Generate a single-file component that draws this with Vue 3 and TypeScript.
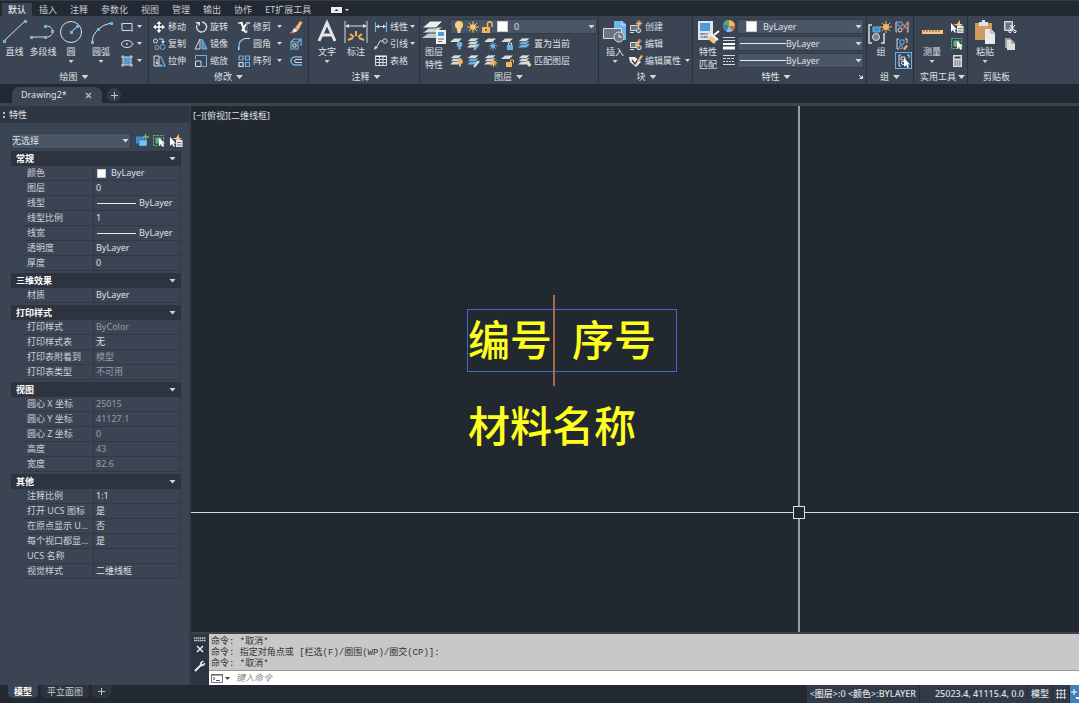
<script setup lang="ts">
import { ref } from 'vue'

interface Tool { icon: string; label: string; arrow?: boolean }
interface Row { name: string; value: string; kind?: 'swatch' | 'line'; muted?: boolean }
interface Section { title: string; rows: Row[] }

const menus: string[] = ['默认', '插入', '注释', '参数化', '视图', '管理', '输出', '协作', 'ET扩展工具']
const activeMenu = ref('默认')

const W = '#d9dcdf'
const B = '#6cb2e4'
const O = '#f3b562'

const layers = (extra: string): string =>
  `<path d="M4 1.500h8L8.500 5H0z" fill="${W}"/>${extra}`
const stack = (extra: string, tint = W): string =>
  `<path d="M4 7h8l-3.500 3.500H0z" fill="${tint}"/><path d="M4 4h8L8.500 7.500H0z" fill="${tint}" stroke="#3b4453" stroke-width=".6"/><path d="M4 1h8L8.500 4.500H0z" fill="${W}" stroke="#3b4453" stroke-width=".6"/>${extra}`
const bulb = (x: number, y: number, c: string): string =>
  `<circle cx="${x}" cy="${y}" r="2.800" fill="${c}"/><path d="M${x} ${y + 2}v3" stroke="${c}" stroke-width="2"/>`
const sun = (x: number, y: number, c: string, r: number): string =>
  `<circle cx="${x}" cy="${y}" r="${r}" fill="${c}"/><path d="M${x - 2 * r} ${y}h${4 * r}M${x} ${y - 2 * r}v${4 * r}M${x - 1.4 * r} ${y - 1.4 * r}l${2.8 * r} ${2.8 * r}M${x - 1.4 * r} ${y + 1.4 * r}l${2.8 * r} ${-2.8 * r}" stroke="${c}"/>`
const pencil = `<path d="M6 8l4-6 2.500 1.500L8.500 9 6 10z" fill="${O}"/><path d="M9.500 2.500L12 4" stroke="#d9653b" stroke-width="1.500"/>`

const small: Record<string, string> = {
  rect: `<path d="M2 3.500h10v7H2z" fill="none" stroke="${W}"/><path d="M1 3h2v2H1zM11 9.500h2v2h-2z" fill="${B}"/>`,
  ellipse: `<ellipse cx="7" cy="7" rx="5.500" ry="3.500" fill="none" stroke="${W}"/><path d="M6 6h2v2H6zM11.500 6h2v2h-2z" fill="${B}"/>`,
  hatch: `<path d="M3 3h8v8H3z" fill="#4a8cc4"/><path d="M3 1v12M11 1v12M1 3h12M1 11h12" stroke="${W}"/><path d="M4 8l4-4M5 10l5-5M8 11l3-3" stroke="${B}"/>`,
  move: `<path d="M7 2v10M2 7h10" stroke="#fff" stroke-width="1.500"/><path d="M7 1L4.500 4h5zM7 13l-2.500-3h5zM1 7l3-2.500v5zM13 7l-3-2.500v5z" fill="#fff"/>`,
  rotate: `<path d="M8 2a5 5 0 1 1-5 3" fill="none" stroke="${W}" stroke-width="1.400"/><path d="M1 2h5v4z" fill="${W}"/>`,
  trim: `<path d="M1 3h5M9 3h4" stroke="${W}" stroke-width="1.500"/><path d="M4 2l4 10M9 4l-4 7" stroke="#fff" stroke-width="2"/><path d="M10 4v8" stroke="${B}" stroke-dasharray="2 1"/><circle cx="9" cy="12" r="1.300" fill="${W}"/>`,
  erase: `<path d="M6 8l5-7 2.500 1.500L9.500 10z" fill="${O}"/><path d="M5 8l4 2-2 2H3z" fill="#eee"/><path d="M1 12.500h5" stroke="#e0734c" stroke-width="1.500"/>`,
  copy: `<g fill="none" stroke="${W}"><circle cx="3.500" cy="4" r="2"/><path d="M7 2h4v3"/></g><path d="M9 4l2 3 2-3z" fill="${W}"/><g fill="none" stroke="${B}"><circle cx="5" cy="10.500" r="2"/><circle cx="10.500" cy="10" r="2.500"/></g>`,
  mirror: `<path d="M6 2v10H1z" fill="none" stroke="${W}"/><path d="M8 2v10h5z" fill="#4a8cc4" stroke="${B}"/>`,
  fillet: `<path d="M2 13V9a7 7 0 0 1 5-7" fill="none" stroke="${B}" stroke-width="1.500"/><path d="M7 1.500h6M1.500 10v3" stroke="${W}"/>`,
  explode: `<path d="M2 5h7v7H2zM5 2h7v7M9 5l3-3M2 5l3-3" fill="none" stroke="${B}" stroke-width="1.200"/><path d="M4 7h3v3H4z" fill="none" stroke="${W}"/>`,
  stretch: `<path d="M2 2h5v10H2z" fill="none" stroke="${W}"/><path d="M7 3h2l4 9H7M4 11h6" fill="none" stroke="${B}" stroke-width="1.200"/><path d="M5 5v5M3.500 8L5 10l1.500-2" stroke="${W}" fill="none"/>`,
  scale: `<path d="M1.500 5V1.500h11v11H8" fill="none" stroke="${B}"/><path d="M1.500 7h5.500v5.500H1.500z" fill="none" stroke="${W}"/>`,
  array: `<g fill="none" stroke="${B}" stroke-width="1.200"><path d="M2 2h4v4H2zM8.500 2h4v4h-4zM8.500 8.500h4v4h-4z"/><path d="M2 8.500h4v4H2z" stroke="${W}"/></g>`,
  offset: `<path d="M13 3H6a4 4 0 0 0 0 8h7" fill="none" stroke="${B}" stroke-width="1.500"/><path d="M13 5.500H7a1.500 1.500 0 0 0 0 3h6" fill="none" stroke="${W}"/>`,
  linear: `<path d="M1.500 2v10M12.500 2v10" stroke="${B}" stroke-width="1.200"/><path d="M2 6.500h10" stroke="${W}"/><path d="M2 6.500l3-2v4zM12 6.500l-3-2v4z" fill="${W}"/>`,
  leader: `<circle cx="11" cy="4" r="2.200" fill="none" stroke="${W}"/><path d="M9 4H6L2 11" fill="none" stroke="${W}"/><path d="M0 13l1-4 3 1.500z" fill="${W}"/>`,
  table: `<path d="M1.500 2.500h11v9h-11zM1.500 5.500h11M1.500 8.500h11M5.500 3v8M9 3v8" fill="none" stroke="${W}"/><path d="M1 2h12" stroke="#fff"/>`,
  lOff: layers(bulb(9.5, 7.5, B)),
  lIso: stack(`<path d="M7 13l5-6" stroke="${B}" stroke-width="2"/>`),
  lFreeze: layers(sun(9, 9, B, 2)),
  lLock: layers(`<path d="M6 8h6v5H6z" fill="${B}"/><path d="M7.500 8V6h3v2" fill="none" stroke="${W}"/>`),
  lCurrent: stack('', B),
  lOn: stack(bulb(10, 7.5, O)),
  lUniso: stack(`<path d="M7 13l5-6" stroke="${W}" stroke-width="2"/>`, B),
  lThaw: stack(sun(9.5, 9, O, 2)),
  lUnlock: layers(`<path d="M5 8h6v5H5z" fill="${O}"/><path d="M9.500 8V6h3v3" fill="none" stroke="${O}"/>`),
  lMatch: stack(`<path d="M7 8l4 5 2.500-2-3-4z" fill="#f3d7a6"/>`),
  create: `<path d="M1.500 5.500h8v5h-8zM1 12.500h4" fill="#687382" stroke="${W}"/><circle cx="9.500" cy="10.500" r="2.200" fill="#687382" stroke="${W}"/>${sun(10, 3.5, O, 1.6)}`,
  edit: `<path d="M1.500 5.500h8v5h-8zM1 12.500h4" fill="#687382" stroke="${W}"/><circle cx="10" cy="10.500" r="2.200" fill="#687382" stroke="${W}"/>${pencil}`,
  attr: `<path d="M0 3h6l6 5-5 5-6-5z" fill="#eee"/><path d="M3 6l3 4 4-6" fill="none" stroke="#3b4453" stroke-width="1.500"/><path d="M8 7l4-6 2 1-4 6z" fill="${O}"/>`,
  wheel: `<circle cx="7" cy="7" r="6" fill="#f0c04a"/><path d="M7 7V1a6 6 0 0 0-5.500 4z" fill="#5ba664"/><path d="M7 7L1.500 5a6 6 0 0 0 3 7.500z" fill="#3678c9"/><path d="M7 7l-2.500 5.500a6 6 0 0 0 6-.800z" fill="#76c4ea"/><path d="M7 7h6a6 6 0 0 1-2.500 4.700z" fill="#db653f"/>`,
  weights: `<path d="M1 1.500h12M1 4.500h12" stroke="${W}"/><path d="M1 8h12" stroke="#fff" stroke-width="2"/><path d="M1 12h12" stroke="#fff" stroke-width="3"/>`,
  types: `<path d="M1 2.500h12M1 11.500h12" stroke="${W}"/><path d="M1 5.500h12" stroke="${W}" stroke-dasharray="3 1"/><path d="M1 8.500h12" stroke="${W}" stroke-dasharray="2 1"/>`,
  ungroup: `<path d="M2 2H1v10h1M12 2h1v10h-1" stroke="${W}" fill="none"/><path d="M3 2h4v4H3z" fill="none" stroke="${B}"/><circle cx="5" cy="10" r="2" fill="none" stroke="${W}"/><path d="M8 4l4 5M12 3L8 9" stroke="#e37a55" stroke-width="1.300"/>`,
  groupEdit: `<path d="M4 2H2v10h2M10 2h2v4" stroke="${W}" fill="none"/><path d="M5 3h4v4H5z" fill="none" stroke="${B}"/><circle cx="6" cy="10" r="1.600" fill="none" stroke="${B}"/><path d="M8 12l3-4 2 1-3 4z" fill="${O}"/>`,
  groupSel: `<path d="M4 1H2v11h2M10 1h2v3" stroke="${W}" fill="none"/><path d="M4 3h4v3H4z" fill="none" stroke="${W}"/><circle cx="6" cy="9" r="1.600" fill="none" stroke="${W}"/><path d="M7 4v9l2-2 1.500 3 1.500-1-1.500-2.500H13z" fill="#fff"/>`,
  quick: `<path d="M1 3v9l2-2 2 3 1-1-1.500-2.500H7z" fill="#fff"/><path d="M3 4h4l3-4v4h3l-5 4V6z" fill="#f6c886"/><path d="M7 6h6.500v7H7z" fill="#e8e8e8"/><path d="M8 8.500h4.500M8 11h4.500" stroke="#5d7a98"/>`,
  select: `<path d="M1.500 1.500h10v10h-10z" fill="none" stroke="#65bd82" stroke-dasharray="2 1"/><path d="M3.500 3.500h6v6h-6z" fill="#5fb480"/><path d="M7 4v8l2-2 1.500 3 1.500-1-1.500-2.500H13z" fill="#fff"/>`,
  calc: `<path d="M3 1h9v12H3z" fill="#ddd"/><path d="M4.500 3.500h6" stroke="#3b4453" stroke-width="2"/><path d="M4.500 7h6M4.500 9h6M4.500 11h6" stroke="#3b4453" stroke-dasharray="1.500 .8"/>`,
  cut: `<path d="M1.500 1.500h8v9h-8z" fill="#9aa1aa" stroke="${W}"/><path d="M3 4h5M3 6h5M3 8h3" stroke="#3b4453"/><path d="M7 5l5 6M12 5l-5 6" stroke="#fff"/><circle cx="7" cy="11.500" r="1.200" fill="none" stroke="#fff"/><circle cx="12" cy="11.500" r="1.200" fill="none" stroke="#fff"/>`,
  pages: `<path d="M2 1h5l3 3v7H2z" fill="#9ba2aa"/><path d="M4 3h5l3 3v7H4z" fill="#ddd"/><path d="M9 3v3h3" fill="none" stroke="#777"/>`,
  bulb: `<circle cx="7" cy="5" r="4" fill="#fbd078"/><path d="M5 8h4v3H5z" fill="#fbd078"/><path d="M5.500 12h3" stroke="#fff" stroke-width="1.500"/>`,
  sun: sun(7, 7, '#fbc768', 2.8),
  unlock: `<path d="M2 7h8v6H2z" fill="#f5b95c"/><path d="M7.500 7V4a2 2 0 0 1 4.500 0v3" fill="none" stroke="#f5b95c" stroke-width="1.500"/><path d="M6 9v2" stroke="#604a25" stroke-width="1.500"/>`,
  pim: `<path d="M1 2.500h8v7H1z" fill="#3f8fd0"/><path d="M4 6h8v6H4z" fill="#7cc3f3" stroke="#2a5c8c" stroke-width=".5"/><path d="M10.500 0v6M8 3h6" stroke="#69c486" stroke-width="1.300"/>`,
}

const big: Record<string, string> = {
  line: `<path d="M3 23L24 3" stroke="${W}"/><path d="M2 22h3v3H2zM23 2h3v3h-3z" fill="${B}"/>`,
  pline: `<path d="M3 19h14M17 19c9 0 9-11 0-11" fill="none" stroke="${W}"/><path d="M1 18h3v3H1zM15 18h3v3h-3zM15 7h3v3h-3zM22 12h3v3h-3z" fill="${B}"/>`,
  circle: `<circle cx="14" cy="14" r="10.500" fill="none" stroke="${W}"/><path d="M14 14l6-5" stroke="${B}" stroke-width="1.500"/><path d="M13 13h3v3h-3zM19 7h3v3h-3z" fill="${B}"/>`,
  arc: `<path d="M5 24A24 20 0 0 1 24 5" fill="none" stroke="${W}"/><path d="M4 23h3v3H4zM10 10h3v3h-3zM23 4h3v3h-3z" fill="${B}"/>`,
  text: `<path d="M6 23l8-18 8 18M9 17h10" fill="none" stroke="#e4e5e7" stroke-width="3"/>`,
  dim: `<path d="M3 3v22M25 3v22" stroke="${W}"/><path d="M4 8h20" stroke="${W}"/><path d="M3 8l4-2v4zM25 8l-4-2v4z" fill="${W}"/><path d="M6 22l5-2M8 16l4 3M14 13v5M20 16l-4 3M22 22l-5-2" stroke="${O}" stroke-width="2"/>`,
  layerProps: `<path d="M10 14h13l-7 6H2z" fill="#c5c9ce"/><path d="M10 9h13l-7 6H2z" fill="#d3d6da" stroke="#3b4453"/><path d="M10 3h13l-7 7H2z" fill="#eee" stroke="#3b4453"/><path d="M16 12h10v14H16z" fill="#f1f1f1"/><path d="M18 14h6v4h-6z" fill="#4d9bd8"/><path d="M18 21h6M18 23.500h4" stroke="#667"/>`,
  insert: `<path d="M13 3h8l4 3v16H13z" fill="#6eb7ea"/><path d="M21 3v4h4" fill="none" stroke="#cfe7f8"/><path d="M2.500 10.500h18v10h-18z" fill="#6b7582" stroke="${W}"/><circle cx="18" cy="19" r="5" fill="#6b7582" stroke="${W}"/><path d="M18 16v3h3" fill="none" stroke="#fff"/>`,
  match: `<path d="M4 3h15v19H4z" fill="#e2e3e4"/><path d="M6 5h10v8H6z" fill="#4d9bd8"/><path d="M6 16h8M6 19h8M8 15v2M11 18v2" stroke="#667"/><path d="M14 21l6 5 4-5-6-4z" fill="#f0c78d"/><path d="M20 17l5-4M17 16l7 6" stroke="#fff" stroke-width="2"/>`,
  group: `<path d="M5 7H2v18h3M14 25h3V15" fill="none" stroke="${W}" stroke-width="1.500"/><path d="M6 9h7v5H6z" fill="#3f8fc9" stroke="${B}"/><circle cx="9" cy="19" r="3.500" fill="#7b828c" stroke="${W}"/>${sun(19, 9, O, 3)}`,
  ruler: `<path d="M4 12h21v4H4z" fill="#f5c877"/><path d="M6 12v2M9 12v2M12 12v2M15 12v2M18 12v2M21 12v2" stroke="#755a2c"/>`,
  paste: `<path d="M4 5h17v17H4z" fill="#cf9a62"/><path d="M8 4h9v4H8z" fill="#dfe1e4"/><path d="M11 2h3v2h-3z" fill="#dfe1e4"/><path d="M14 11h6l4 4v11H14z" fill="#e8e9eb"/><path d="M20 11v4h4" fill="none" stroke="#999"/>`,
}

const drawBig: Tool[] = [
  { icon: 'line', label: '直线' }, { icon: 'pline', label: '多段线' },
  { icon: 'circle', label: '圆', arrow: true }, { icon: 'arc', label: '圆弧', arrow: true },
]
const drawSmall: Tool[] = [
  { icon: 'rect', label: '矩形' }, { icon: 'ellipse', label: '椭圆' }, { icon: 'hatch', label: '图案填充' },
]
const modify: Tool[] = [
  { icon: 'move', label: '移动' }, { icon: 'rotate', label: '旋转' }, { icon: 'trim', label: '修剪', arrow: true }, { icon: 'erase', label: '' },
  { icon: 'copy', label: '复制' }, { icon: 'mirror', label: '镜像' }, { icon: 'fillet', label: '圆角', arrow: true }, { icon: 'explode', label: '' },
  { icon: 'stretch', label: '拉伸' }, { icon: 'scale', label: '缩放' }, { icon: 'array', label: '阵列', arrow: true }, { icon: 'offset', label: '' },
]
const annotBig: Tool[] = [{ icon: 'text', label: '文字', arrow: true }, { icon: 'dim', label: '标注' }]
const annot: Tool[] = [
  { icon: 'linear', label: '线性', arrow: true }, { icon: 'leader', label: '引线', arrow: true }, { icon: 'table', label: '表格' },
]
const layerRows: Tool[][] = [
  ['lOff', 'lIso', 'lFreeze', 'lLock', 'lCurrent'].map((icon, i) => ({ icon, label: i === 4 ? '置为当前' : '' })),
  ['lOn', 'lUniso', 'lThaw', 'lUnlock', 'lMatch'].map((icon, i) => ({ icon, label: i === 4 ? '匹配图层' : '' })),
]
const block: Tool[] = [
  { icon: 'create', label: '创建' }, { icon: 'edit', label: '编辑' }, { icon: 'attr', label: '编辑属性', arrow: true },
]

const sections: Section[] = [
  { title: '常规', rows: [
    { name: '颜色', value: 'ByLayer', kind: 'swatch' }, { name: '图层', value: '0' },
    { name: '线型', value: 'ByLayer', kind: 'line' }, { name: '线型比例', value: '1' },
    { name: '线宽', value: 'ByLayer', kind: 'line' }, { name: '透明度', value: 'ByLayer' }, { name: '厚度', value: '0' },
  ] },
  { title: '三维效果', rows: [{ name: '材质', value: 'ByLayer' }] },
  { title: '打印样式', rows: [
    { name: '打印样式', value: 'ByColor', muted: true }, { name: '打印样式表', value: '无' },
    { name: '打印表附着到', value: '模型', muted: true }, { name: '打印表类型', value: '不可用', muted: true },
  ] },
  { title: '视图', rows: [
    { name: '圆心 X 坐标', value: '25015', muted: true }, { name: '圆心 Y 坐标', value: '41127.1', muted: true },
    { name: '圆心 Z 坐标', value: '0', muted: true }, { name: '高度', value: '43', muted: true }, { name: '宽度', value: '82.6', muted: true },
  ] },
  { title: '其他', rows: [
    { name: '注释比例', value: '1:1' }, { name: '打开 UCS 图标', value: '是' }, { name: '在原点显示 U...', value: '否' },
    { name: '每个视口都显...', value: '是' }, { name: 'UCS 名称', value: '' }, { name: '视觉样式', value: '二维线框' },
  ] },
]
const collapsed = ref<Record<string, boolean>>({})
const toggle = (title: string): void => {
  collapsed.value[title] = !collapsed.value[title]
}

const history: string[] = ['命令: *取消*', '命令: 指定对角点或 [栏选(F)/圈围(WP)/圈交(CP)]:', '命令: *取消*']
const command = ref('')
</script>

<template>
  <div class="app">
    <nav class="menu">
      <button v-for="m in menus" :key="m" class="menu-tab" :class="{ active: m === activeMenu }" @click="activeMenu = m">{{ m }}</button>
      <button class="menu-min" aria-label="最小化功能区">
        <svg width="18" height="8" viewBox="0 0 18 8"><path d="M0 1h11v6H0z" fill="#eee" /><path d="M3.500 5h4l-2-2z" fill="#333" /><path d="M14 3h4l-2 2z" fill="#ddd" /></svg>
      </button>
    </nav>

    <div class="ribbon">
      <section class="panel p-draw">
        <div class="tools">
          <button v-for="t in drawBig" :key="t.icon" class="big"><svg viewBox="0 0 28 27" v-html="big[t.icon]" /><span>{{ t.label }}</span><i v-if="t.arrow" class="tri" /></button>
          <div class="stack">
            <button v-for="t in drawSmall" :key="t.icon" class="tool" :aria-label="t.label"><svg viewBox="0 0 14 14" v-html="small[t.icon]" /><i class="tri" /></button>
          </div>
        </div>
        <button class="title">绘图<i class="tri wide" /></button>
      </section>

      <section class="panel p-modify">
        <div class="tools modify">
          <button v-for="t in modify" :key="t.icon" class="tool" :aria-label="t.label || t.icon"><svg viewBox="0 0 14 14" v-html="small[t.icon]" /><span v-if="t.label">{{ t.label }}</span><i v-if="t.arrow" class="tri end" /></button>
        </div>
        <button class="title">修改<i class="tri wide" /></button>
      </section>

      <section class="panel p-annot">
        <div class="tools">
          <button v-for="t in annotBig" :key="t.icon" class="big"><svg viewBox="0 0 28 27" v-html="big[t.icon]" /><span>{{ t.label }}</span><i v-if="t.arrow" class="tri" /></button>
          <div class="stack grow">
            <button v-for="t in annot" :key="t.icon" class="tool"><svg viewBox="0 0 14 14" v-html="small[t.icon]" /><span>{{ t.label }}</span><i v-if="t.arrow" class="tri end" /></button>
          </div>
        </div>
        <button class="title">注释<i class="tri wide" /></button>
      </section>

      <section class="panel p-layer">
        <div class="tools">
          <button class="big"><svg viewBox="0 0 28 27" v-html="big.layerProps" /><span>图层<br>特性</span></button>
          <div class="stack grow">
            <label class="combo">
              <svg viewBox="0 0 14 14" v-html="small.bulb" /><svg viewBox="0 0 14 14" v-html="small.sun" /><svg viewBox="0 0 14 14" v-html="small.unlock" />
              <i class="swatch" />
              <select aria-label="图层"><option>0</option></select><i class="tri wide" />
            </label>
            <div v-for="(r, i) in layerRows" :key="i" class="layer-row">
              <button v-for="t in r" :key="t.icon" class="tool" :aria-label="t.label || t.icon"><svg viewBox="0 0 14 14" v-html="small[t.icon]" /><span v-if="t.label">{{ t.label }}</span></button>
            </div>
          </div>
        </div>
        <button class="title">图层<i class="tri wide" /></button>
      </section>

      <section class="panel p-block">
        <div class="tools">
          <button class="big"><svg viewBox="0 0 28 27" v-html="big.insert" /><span>插入</span><i class="tri" /></button>
          <div class="stack grow">
            <button v-for="t in block" :key="t.icon" class="tool"><svg viewBox="0 0 14 14" v-html="small[t.icon]" /><span>{{ t.label }}</span><i v-if="t.arrow" class="tri end" /></button>
          </div>
        </div>
        <button class="title">块<i class="tri wide" /></button>
      </section>

      <section class="panel p-props">
        <div class="tools">
          <button class="big"><svg viewBox="0 0 28 27" v-html="big.match" /><span>特性<br>匹配</span></button>
          <div class="stack">
            <svg v-for="n in ['wheel', 'weights', 'types']" :key="n" class="mark" viewBox="0 0 14 14" v-html="small[n]" />
          </div>
          <div class="stack grow">
            <label class="combo color"><i class="swatch" /><select aria-label="对象颜色"><option>ByLayer</option></select><i class="tri wide" /></label>
            <label class="combo"><i class="rule" /><select aria-label="线宽"><option>ByLayer</option></select><i class="tri wide" /></label>
            <label class="combo"><i class="rule" /><select aria-label="线型"><option>ByLayer</option></select><i class="tri wide" /></label>
          </div>
        </div>
        <div class="title-row">
          <button class="title">特性<i class="tri wide" /></button>
          <button class="launch" aria-label="特性选项板"><svg width="6" height="6" viewBox="0 0 6 6"><path d="M1 1l3 3" stroke="#ddd" /><path d="M5 1v4H1z" fill="#ddd" /></svg></button>
        </div>
      </section>

      <section class="panel p-group">
        <div class="tools">
          <button class="big"><svg viewBox="0 0 28 27" v-html="big.group" /><span>组</span></button>
          <div class="stack">
            <button v-for="n in ['ungroup', 'groupEdit', 'groupSel']" :key="n" class="tool" :class="{ picked: n === 'groupSel' }" :aria-label="n"><svg viewBox="0 0 14 14" v-html="small[n]" /></button>
          </div>
        </div>
        <button class="title">组<i class="tri wide" /></button>
      </section>

      <section class="panel p-util">
        <div class="tools">
          <button class="big"><svg viewBox="0 0 28 27" v-html="big.ruler" /><span>测量</span><i class="tri" /></button>
          <div class="stack">
            <button v-for="n in ['quick', 'select', 'calc']" :key="n" class="tool" :aria-label="n"><svg viewBox="0 0 14 14" v-html="small[n]" /></button>
          </div>
        </div>
        <button class="title">实用工具<i class="tri wide" /></button>
      </section>

      <section class="panel p-clip">
        <div class="tools">
          <button class="big"><svg viewBox="0 0 28 27" v-html="big.paste" /><span>粘贴</span><i class="tri" /></button>
          <div class="stack">
            <button v-for="n in ['cut', 'pages']" :key="n" class="tool" :aria-label="n"><svg viewBox="0 0 14 14" v-html="small[n]" /></button>
          </div>
        </div>
        <span class="title">剪贴板</span>
      </section>
    </div>

    <div class="docs">
      <div class="doc">
        <button class="doc-name">Drawing2*</button>
        <button class="doc-x" aria-label="关闭"><svg width="7" height="7" viewBox="0 0 7 7"><path d="M1 1l5 5M6 1L1 6" stroke="#aeb4bc" stroke-width="1.500" /></svg></button>
      </div>
      <button class="doc-add" aria-label="新建图形"><svg width="7" height="7" viewBox="0 0 7 7"><path d="M0 3.500h7M3.500 0v7" stroke="#c0c5cb" /></svg></button>
    </div>

    <main class="work">
      <aside class="palette">
        <header class="pal-title"><i class="grip" />特性</header>
        <div class="picker">
          <label class="combo none"><select aria-label="选择对象"><option>无选择</option></select><i class="tri wide" /></label>
          <button v-for="n in ['pim', 'select', 'quick']" :key="n" class="tool" :aria-label="n"><svg viewBox="0 0 14 14" v-html="small[n]" /></button>
        </div>
        <div class="sections">
          <section v-for="s in sections" :key="s.title">
            <button class="sec-head" :aria-expanded="!collapsed[s.title]" @click="toggle(s.title)">{{ s.title }}<i class="tri wide" /></button>
            <table v-if="!collapsed[s.title]">
              <tbody>
                <tr v-for="r in s.rows" :key="r.name">
                  <th scope="row">{{ r.name }}</th>
                  <td :class="{ muted: r.muted }"><div><i v-if="r.kind === 'swatch'" class="swatch" /><i v-if="r.kind === 'line'" class="rule" />{{ r.value }}</div></td>
                </tr>
              </tbody>
            </table>
          </section>
        </div>
      </aside>

      <div class="stage">
        <div class="canvas">
          <div class="view-label">[−][俯视][二维线框]</div>
          <div class="frame" />
          <div class="marker" />
          <div class="cad first"><span>编号</span><span>序号</span></div>
          <div class="cad second">材料名称</div>
          <div class="cross-h" />
          <div class="cross-v" />
          <div class="pickbox" />
        </div>
        <div class="cmd">
          <div class="cmd-side">
            <svg width="12" height="5" viewBox="0 0 12 5"><path d="M0 1h12M0 3.500h12" stroke="#c5c9ce" stroke-width="1.500" stroke-dasharray="1.500 .5" /></svg>
            <button aria-label="关闭命令行"><svg width="8" height="8" viewBox="0 0 8 8"><path d="M1 1l6 6M7 1L1 7" stroke="#e6e8ea" stroke-width="1.500" /></svg></button>
            <button aria-label="自定义"><svg width="12" height="12" viewBox="0 0 12 12"><path d="M1 11l6-6" stroke="#eee" stroke-width="2" /><path d="M10 1L7.500 3.500l1 1L11 2.500A3 3 0 0 1 7 6 3 3 0 0 1 6 4a3 3 0 0 1 4-3z" fill="#eee" /></svg></button>
          </div>
          <div class="cmd-main">
            <div class="history"><p v-for="(h, i) in history" :key="i">{{ h }}</p></div>
            <label class="entry">
              <svg width="20" height="9" viewBox="0 0 20 9"><path d="M.5.500h11v8H.5z" fill="#fff" stroke="#777" /><path d="M0 1h12M2 3l2 1.500L2 6M5 6.500h4" fill="none" stroke="#555" /><path d="M14 3h5l-2.500 3z" fill="#444" /></svg>
              <input v-model="command" type="text" placeholder="键入命令" aria-label="键入命令">
            </label>
          </div>
        </div>
      </div>
    </main>

    <footer class="status">
      <button class="layout on">模型</button>
      <button class="layout">平立面图</button>
      <button class="layout add" aria-label="新建布局"><svg width="7" height="7" viewBox="0 0 7 7"><path d="M0 3.500h7M3.500 0v7" stroke="#c0c5cb" /></svg></button>
      <span class="cell push">&lt;图层&gt;:0 &lt;颜色&gt;:BYLAYER</span>
      <span class="cell coords">25023.4, 41115.4, 0.0</span>
      <button class="cell mode">模型</button>
      <button class="cell grid" aria-label="栅格"><svg width="12" height="12" viewBox="0 0 12 12"><path d="M2.500 1v10M6 1v10M9.500 1v10M1 2.500h10M1 6h10M1 9.500h10" stroke="#c9cdd2" /></svg></button>
      <button class="cell snap" aria-label="捕捉模式"><svg width="9" height="14" viewBox="0 0 9 14"><path d="M1 5h6M4 2v6" stroke="#fff" /><path d="M6 11h3" stroke="#fff" stroke-width="2" /></svg></button>
    </footer>
  </div>
</template>

<style>
html, body { margin: 0; background: #222933; }
</style>

<style scoped>
* { box-sizing: border-box; }
.app {
  display: flex;
  flex-direction: column;
  min-height: 100vh;
  overflow: hidden;
  background: #222933;
  color: #dfe1e4;
  font: 9px/12px "Noto Sans", "Noto Sans CJK SC", sans-serif;
}
button, select, input { margin: 0; padding: 0; border: 0; background: none; color: inherit; font: inherit; }
button { display: flex; align-items: center; white-space: nowrap; }
svg { display: block; flex: none; overflow: hidden; }

.tri { width: 5px; height: 3px; flex: none; background: #d4d7db; clip-path: polygon(0 0, 100% 0, 50% 100%); }
.tri.wide { width: 7px; height: 4px; }
.tri.end { margin-left: auto; }
.swatch { width: 11px; height: 11px; flex: none; background: #fff; border: 1px solid #c9ccd0; }
.rule { height: 1px; flex: none; background: #e8eaec; }

.menu { display: flex; gap: 1px; height: 16px; padding: 2px 0 0 2px; border-top: 1px solid #343c49; }
.menu-tab { padding: 0 6px; color: #c6cad0; }
.menu-tab.active { background: #3b4453; color: #fff; }
.menu-min { margin-left: 13px; }

.ribbon { display: flex; height: 68px; background: #3b4453; }
.panel { display: flex; flex-direction: column; flex: none; padding-top: 2px; border-right: 1px solid #293039; }
.tools { display: flex; height: 52px; }
.stack { display: flex; flex-direction: column; }
.grow { flex: 1; min-width: 0; }
.title { height: 14px; justify-content: center; align-self: center; gap: 4px; margin-top: auto; line-height: 14px; }
.big { flex-direction: column; width: 28px; line-height: 13px; text-align: center; }
.big svg { width: 28px; height: 27px; }
.big .tri { margin-top: 2px; }
.tool { gap: 2px; height: 17px; }
.tool svg, .mark, .combo svg { width: 14px; height: 14px; }
.mark { margin: 1px 0 2px; }
.combo { display: flex; align-items: center; height: 15px; margin: 1px 0; padding-right: 1px; background: #4a5566; border: 1px solid #343c49; }
.combo select { flex: 1; min-width: 0; height: 13px; appearance: none; outline: none; }

.p-draw { width: 149px; }
.p-draw .big:first-child { width: 29px; }
.p-draw .big:nth-child(4) { width: 32px; }
.p-draw .stack { padding-left: 3px; }
.p-draw .tool { gap: 3px; }
.p-modify { width: 160px; }
.modify { display: grid; grid-template-columns: 42px 43px 52px 14px; grid-auto-rows: 17px; padding-left: 3px; }
.modify .tri { margin-right: 7px; }
.p-annot { width: 111px; padding-left: 4px; }
.p-annot .stack { padding: 0 4px 0 3px; }
.p-annot .tools .big { margin-right: 1px; }
.p-layer { width: 179px; padding-right: 1px; }
.p-layer .stack { padding-left: 2px; }
.p-layer .combo { gap: 3px; padding-left: 1px; }
.p-layer .swatch { margin-right: 3px; }
.p-layer .combo svg { margin-right: -3px; }
.p-layer .combo .swatch { margin-left: 3px; }
.layer-row { display: flex; gap: 3px; }
.p-block { width: 94px; padding-left: 2px; }
.p-block .stack { padding-right: 2px; }
.p-props { width: 174px; padding: 2px 2px 0 1px; }
.p-props .stack.grow { padding-left: 1px; }
.p-props .combo .rule { width: 46px; margin-left: 2px; }
.p-props .color { gap: 6px; padding-left: 8px; }
.title-row { display: flex; align-items: center; margin-top: auto; }
.title-row .title { flex: 1; }
.p-group { width: 47px; }
.picked { width: 17px; justify-content: center; background: #34475e; border: 1px solid #6cb2e4; }
.p-util { width: 54px; padding-left: 4px; }
.p-util .stack { padding-left: 4px; }
.p-util .title { gap: 2px; }
.p-clip { width: 54px; padding-left: 3px; border-right: 0; }
.p-clip .stack { padding-left: 4px; }

.docs { display: flex; align-items: flex-end; height: 22px; padding-left: 12px; border-bottom: 3px solid #3b4453; }
.doc { display: flex; align-items: center; justify-content: space-between; width: 90px; height: 16px; padding: 0 10px 0 9px; background: #3b4453; border-radius: 7px 7px 0 0; }
.doc-add { justify-content: center; width: 14px; height: 14px; margin: 0 0 1px 5px; background: #343c49; border-radius: 7px; }

.work { display: flex; flex: 1; min-height: 0; }
.palette { width: 191px; flex: none; background: #3b4453; border-right: 2px solid #343c49; }
.pal-title { display: flex; align-items: center; gap: 4px; height: 17px; padding-left: 3px; background: #2f3642; }
.grip { width: 2px; height: 6px; border-top: 2px solid #bbb; border-bottom: 2px solid #bbb; }
.picker { display: flex; align-items: center; gap: 3px; padding: 9px 6px 2px 11px; }
.none { width: 120px; height: 16px; margin: 0 1px 0 0; }
.sections { display: flex; flex-direction: column; gap: 2px; padding: 0 8px 0 11px; }
.sec-head { justify-content: space-between; width: 100%; height: 15px; padding: 0 5px; background: #2d333f; color: #fff; font-weight: 700; }
table { width: 158px; margin-left: 12px; border-collapse: separate; border-spacing: 0; table-layout: fixed; }
th, td { height: 15px; padding: 0 0 0 4px; border-bottom: 1px solid #313946; font-weight: 400; text-align: left; white-space: nowrap; line-height: 12px; }
th { width: 70px; color: #cfd3d8; }
td { padding-left: 2px; border-left: 1px solid #313946; border-right: 1px solid #313946; }
td div { display: flex; align-items: center; height: 12px; }
td .swatch { width: 9px; height: 9px; margin: 0 5px 0 1px; }
td .rule { width: 39px; margin: 0 3px 0 1px; }
td.muted { color: #969da7; }

.stage { display: flex; flex: 1; flex-direction: column; min-width: 0; }
.canvas { position: relative; flex: 1; overflow: hidden; background: #212830; }
.view-label { padding: 4px 2px; }
.frame { position: absolute; left: 276px; top: 203px; width: 210px; height: 63px; border: 1px solid #3f68c8; }
.marker { position: absolute; left: 362px; top: 189px; width: 2px; height: 91px; background: #a8684a; }
.cad { position: absolute; left: 277px; color: #ffff1e; font-family: "Noto Sans CJK SC", sans-serif; font-size: 42px; line-height: 50px; font-weight: 500; white-space: nowrap; }
.first { display: flex; gap: 20px; top: 207px; }
.second { top: 293px; }
.cross-h { position: absolute; left: 0; right: 0; top: 406px; height: 1px; background: #d5d8dc; }
.cross-v { position: absolute; top: 0; bottom: 0; left: 607px; width: 2px; background: #969ba1; }
.pickbox { position: absolute; left: 602px; top: 400px; width: 12px; height: 13px; background: #212830; border: 1px solid #dfe2e5; }

.cmd { display: flex; height: 53px; border-top: 2px solid #39434e; }
.cmd-side { display: flex; flex-direction: column; align-items: center; width: 18px; padding-top: 3px; background: #2d3441; }
.cmd-side button { margin-top: 3px; }
.cmd-side button:last-child { margin-top: 7px; }
.cmd-main { display: flex; flex: 1; flex-direction: column; min-width: 0; }
.history { flex: 1; padding: 3px 2px 0; background: #c8c8c8; border-bottom: 1px solid #999; color: #333; font-family: "Liberation Mono", "Noto Sans CJK SC", monospace; line-height: 11px; }
.history p { margin: 0; height: 11px; white-space: nowrap; }
.entry { display: flex; align-items: center; gap: 5px; height: 15px; padding-left: 2px; background: #fff; color: #333; }
.entry input { flex: 1; min-width: 0; outline: none; font-style: italic; }
.entry input::placeholder { color: #888; opacity: 1; }

.status { display: flex; height: 18px; padding-left: 8px; }
.layout { height: 13px; padding: 0 6px; background: #2c3440; border-radius: 0 0 5px 5px; color: #c9cdd2; }
.layout + .layout { margin-left: 3px; }
.layout.on { background: #3b4453; color: #fff; font-weight: 700; }
.cell { display: flex; align-items: center; height: 18px; padding: 0 3px; background: #323a47; border-right: 1px solid #262d37; white-space: nowrap; font-weight: 500; }
.push { margin-left: auto; }
.coords { padding-left: 15px; }
.grid { padding: 0 2px; }
.snap { padding: 0; border: 0; background: #3f80bd; }
</style>
